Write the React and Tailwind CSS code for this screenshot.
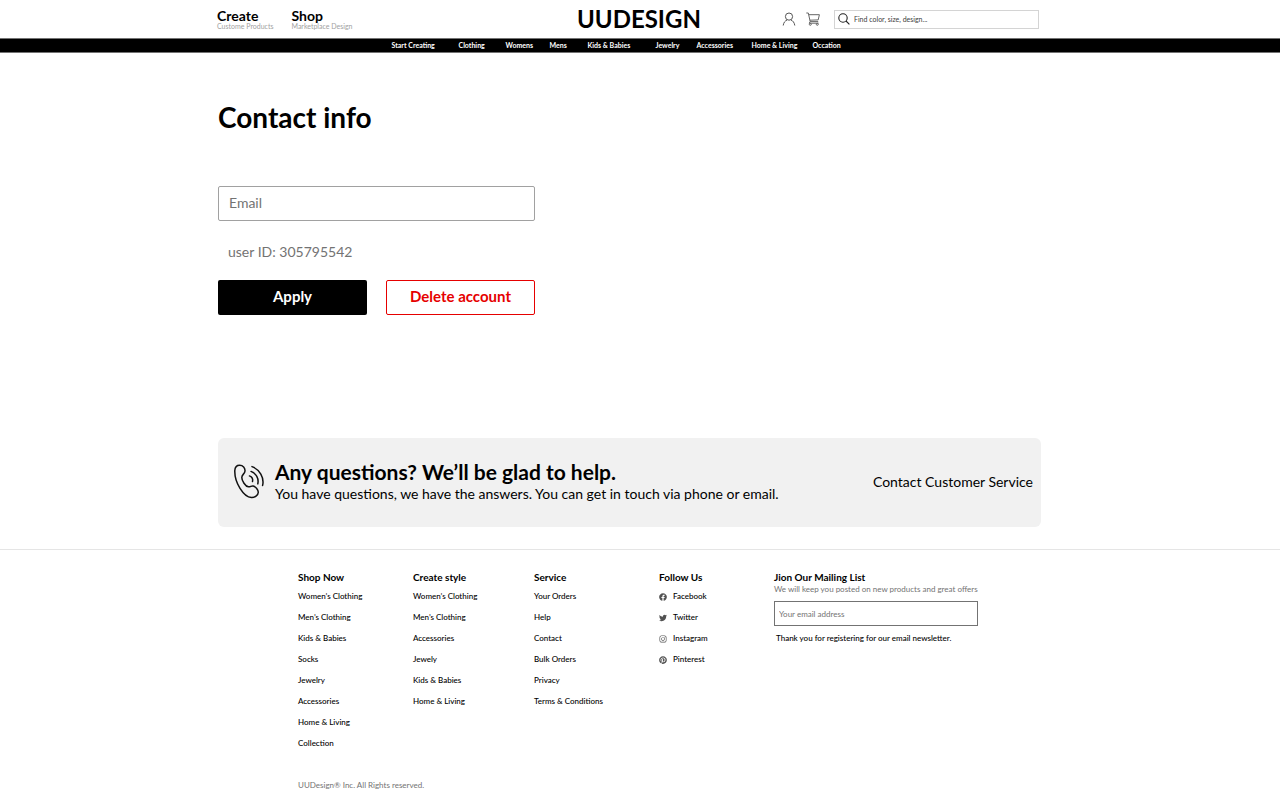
import { FaFacebook, FaTwitter, FaInstagram, FaPinterest } from 'react-icons/fa';

const categories = [
  'Start Creating',
  'Clothing',
  'Womens',
  'Mens',
  'Kids & Babies',
  'Jewelry',
  'Accessories',
  'Home & Living',
  'Occation',
];

const footerColumns = [
  {
    title: 'Shop Now',
    links: ['Women’s Clothing', 'Men’s Clothing', 'Kids & Babies', 'Socks', 'Jewelry', 'Accessories', 'Home & Living', 'Collection'],
  },
  {
    title: 'Create style',
    links: ['Women’s Clothing', 'Men’s Clothing', 'Accessories', 'Jewely', 'Kids & Babies', 'Home & Living'],
  },
  {
    title: 'Service',
    links: ['Your Orders', 'Help', 'Contact', 'Bulk Orders', 'Privacy', 'Terms & Conditions'],
  },
];

const socials = [
  { name: 'Facebook', Icon: FaFacebook },
  { name: 'Twitter', Icon: FaTwitter },
  { name: 'Instagram', Icon: FaInstagram },
  { name: 'Pinterest', Icon: FaPinterest },
];

function UserIcon() {
  return (
    <svg viewBox="0 0 14 14" className="h-3.5 w-3.5" fill="none" stroke="#555" strokeWidth="1">
      <circle cx="7" cy="4.6" r="3.6" />
      <path d="M1.2 13.5c.4-3 2-4.8 3.8-5.4M12.8 13.5c-.4-3-2-4.8-3.8-5.4" />
    </svg>
  );
}

function CartIcon() {
  return (
    <svg viewBox="0 0 14 14" className="h-3.5 w-3.5" fill="none" stroke="#666" strokeWidth="1">
      <path d="M.3 1h2l1.9 8.6h8M2.8 2.7h10.6l-1.2 5.2-8.3.3M4.2 9.6l-1 1.6h9.3" />
      <circle cx="4.3" cy="12.3" r="1" />
      <circle cx="11.3" cy="12.3" r="1" />
    </svg>
  );
}

function SearchIcon() {
  return (
    <svg viewBox="0 0 12 12" className="h-3 w-3 shrink-0" fill="none" stroke="#222" strokeWidth="1.1">
      <circle cx="5" cy="5" r="4.2" />
      <path d="M8 8l3.4 3.4" />
    </svg>
  );
}

function PhoneIcon() {
  return (
    <svg viewBox="0 0 30 35" className="h-[35px] w-[30px] shrink-0" fill="none" stroke="#111" strokeWidth="1.5" strokeLinecap="round" strokeLinejoin="round">
      <path d="M.8 6.5C1 3.6 2.600 1.200 5.600 1.200C9 1.200 11.200 3.800 11 7C10.900 10 7.800 10.300 7.800 13.400C7.800 16.800 11.400 22.400 14.400 22.800C16.600 23.100 17.200 21.600 19.200 22C21.600 22.500 24.400 25.800 24.300 28.300C24.200 31.400 20.600 33.700 17.400 33.500C9.600 33 .4 18.500 .8 6.500Z" />
      <path d="M18 2.600C25.500 5.400 30.500 13.800 28.600 21.400" />
      <path d="M17 7.400C22.200 9.400 25 14.600 23.800 19.800" />
      <path d="M15.400 11.900C18 12.900 19.100 15.200 18.500 17.600" />
    </svg>
  );
}

function Header() {
  return (
    <header>
      <div className="pr-6">
        <div className="mx-auto grid h-[38px] max-w-[822px] grid-cols-[360px_1fr_auto] items-center">
          <div className="flex gap-[18px]">
            <a href="#create">
              <span className="block text-sm leading-[14px] font-bold">Create</span>
              <span className="block text-[7px] leading-[7px] text-neutral-400">Custome Products</span>
            </a>
            <a href="#shop">
              <span className="block text-sm leading-[14px] font-bold">Shop</span>
              <span className="block text-[7px] leading-[7px] text-neutral-400">Marketplace Design</span>
            </a>
          </div>
          <a href="#home" className="text-[24px] leading-[38px] font-bold">UUDESIGN</a>
          <div className="flex items-center gap-2.5">
            <button type="button" aria-label="Account"><UserIcon /></button>
            <button type="button" aria-label="Cart"><CartIcon /></button>
            <label className="ml-1 flex h-[19px] w-[205px] items-center gap-1 border border-neutral-300 px-[3px]">
              <SearchIcon />
              <input
                type="search"
                aria-label="Search"
                placeholder="Find color, size, design..."
                className="min-w-0 flex-1 text-[7px] leading-[14px] outline-none placeholder:text-neutral-700"
              />
            </label>
          </div>
        </div>
      </div>
      <nav className="border-y border-neutral-500 bg-black pr-12">
        <ul className="mx-auto grid w-fit grid-cols-[67px_47px_44px_38px_68px_41px_55px_61px_28px] text-[7px] leading-[13px] font-bold whitespace-nowrap text-white">
          {categories.map((c) => (
            <li key={c}><a href="#category">{c}</a></li>
          ))}
        </ul>
      </nav>
    </header>
  );
}

function ContactForm() {
  return (
    <form className="w-[317px] max-w-full" onSubmit={(e) => e.preventDefault()}>
      <input
        type="email"
        aria-label="Email"
        placeholder="Email"
        className="h-[35px] w-full rounded-xs border border-neutral-400 px-2.5 pb-0.5 text-sm outline-none placeholder:text-neutral-500"
      />
      <p className="mt-[21px] px-2.5 text-sm text-neutral-500">user ID: 305795542</p>
      <div className="mt-[18px] grid grid-cols-2 gap-[19px] text-[15px] font-bold">
        <button type="submit" className="h-[35px] rounded-xs bg-black pb-0.5 text-white">Apply</button>
        <button type="button" className="h-[35px] rounded-xs border border-[#e60000] pb-0.5 text-[#e60000]">Delete account</button>
      </div>
    </form>
  );
}

function HelpBanner() {
  return (
    <section className="flex h-[89px] items-center rounded-md bg-[#f1f1f1] pr-2 pb-0.5 pl-4">
      <PhoneIcon />
      <div className="ml-[11px] flex-1">
        <h2 className="text-[21px] leading-6 font-bold">Any questions? We’ll be glad to help.</h2>
        <p className="text-sm leading-5">You have questions, we have the answers. You can get in touch via phone or email.</p>
      </div>
      <a href="#service" className="text-sm">Contact Customer Service</a>
    </section>
  );
}

function Footer() {
  return (
    <footer className="mt-[22px] border-t border-neutral-200 pt-[19px] pr-1">
      <div className="mx-auto w-fit">
        <div className="grid grid-cols-[115px_121px_125px_115px_204px]">
          {footerColumns.map((col) => (
            <div key={col.title}>
              <h3 className="text-[10px] leading-4 font-bold">{col.title}</h3>
              <ul className="mt-px text-[8px] leading-[21px] font-medium">
                {col.links.map((l) => (
                  <li key={l}><a href="#link">{l}</a></li>
                ))}
              </ul>
            </div>
          ))}
          <div>
            <h3 className="text-[10px] leading-4 font-bold">Follow Us</h3>
            <ul className="mt-px text-[8px] leading-[21px] font-medium">
              {socials.map(({ name, Icon }) => (
                <li key={name}>
                  <a href="#social" className="flex items-center gap-1.5">
                    <Icon className="h-2 w-2 text-neutral-600" />
                    {name}
                  </a>
                </li>
              ))}
            </ul>
          </div>
          <form onSubmit={(e) => e.preventDefault()}>
            <h3 className="text-[10px] leading-4 font-bold">Jion Our Mailing List</h3>
            <p className="text-[8px] leading-[8px] whitespace-nowrap text-neutral-500">We will keep you posted on new products and great offers</p>
            <input
              type="email"
              aria-label="Your email address"
              placeholder="Your email address"
              className="mt-2 h-[25px] w-full border border-neutral-500 px-1 text-[8px] outline-none placeholder:text-neutral-500"
            />
            <p className="mt-[7px] px-0.5 text-[8px] leading-[10px] font-medium">Thank you for registering for our email newsletter.</p>
          </form>
        </div>
        <p className="mt-[23px] text-[8px] leading-4 text-neutral-500">UUDesign® Inc. All Rights reserved.</p>
      </div>
    </footer>
  );
}

export default function App() {
  return (
    <div className="bg-white font-['Lato','Liberation_Sans',sans-serif] text-black">
      <Header />
      <main className="pr-[21px]">
        <div className="mx-auto max-w-[823px]">
          <h1 className="pt-[46px] text-[28px] leading-[36px] font-bold">Contact info</h1>
          <div className="mt-[51px] mb-[123px]">
            <ContactForm />
          </div>
          <HelpBanner />
        </div>
      </main>
      <Footer />
    </div>
  );
}
